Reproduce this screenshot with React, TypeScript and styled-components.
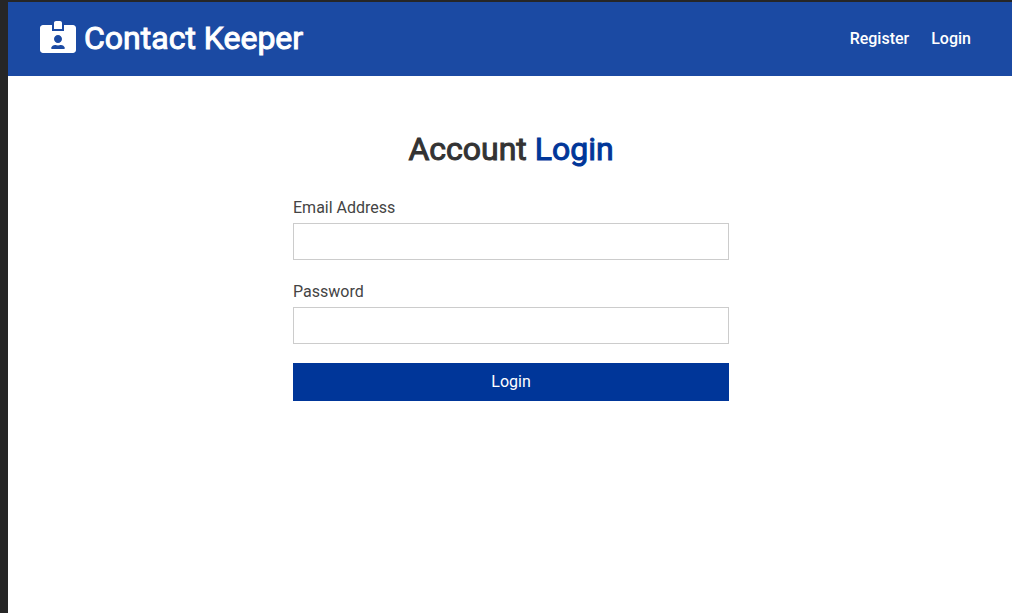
import React from "react";
import styled, { createGlobalStyle } from "styled-components";
import { FaIdCardAlt } from "react-icons/fa";

const GlobalStyle = createGlobalStyle`
  *, *::before, *::after { box-sizing: border-box; margin: 0; padding: 0; }
  body {
    font-family: Roboto, sans-serif;
    font-size: 16px;
    line-height: 26px;
    color: #333;
    background: #fff;
  }
`;

const Frame = styled.div`
  min-height: 100vh;
  border-top: 2px solid #262626;
  border-left: 8px solid #262626;
`;

const Navbar = styled.header`
  display: flex;
  align-items: center;
  justify-content: space-between;
  padding: 17px 32px 19px;
  background: #1b4aa3;
  color: #fff;
`;

const Brand = styled.h1`
  display: flex;
  align-items: center;
  gap: 8px;
  font-size: 32px;
  line-height: 38px;
  font-weight: 400;
  -webkit-text-stroke: 1px;
`;

const BrandIcon = styled(FaIdCardAlt)`
  width: 36px;
  height: 32px;
  margin-bottom: 2px;
  stroke-width: 0;
`;

const NavLinks = styled.nav`
  display: flex;
  gap: 4px;
`;

const NavLink = styled.a`
  padding: 2px 9px 0;
  color: #fff;
  font-weight: 500;
  text-decoration: none;
`;

const FormContainer = styled.main`
  width: 100%;
  max-width: 500px;
  margin: 32px auto;
  padding: 0 31px 0 33px;
`;

const Title = styled.h2`
  padding: 22px 0 27px;
  font-size: 32px;
  line-height: 38px;
  font-weight: 400;
  -webkit-text-stroke: 1px;
  text-align: center;
`;

const Accent = styled.span`
  color: #003699;
`;

const Field = styled.div`
  display: flex;
  flex-direction: column;
  margin-bottom: 19px;
`;

const Label = styled.label`
  margin-bottom: 2px;
  color: #444;
`;

const Input = styled.input`
  width: 100%;
  height: 37px;
  padding: 8px;
  border: 1px solid #ccc;
  font: inherit;
`;

const SubmitButton = styled.button`
  width: 100%;
  height: 38px;
  border: none;
  background: #003699;
  color: #fff;
  font: inherit;
  cursor: pointer;
`;

export default function App() {
  return (
    <>
      <GlobalStyle />
      <Frame>
        <Navbar>
          <Brand>
            <BrandIcon aria-hidden="true" />
            Contact Keeper
          </Brand>
          <NavLinks>
            <NavLink href="#register">Register</NavLink>
            <NavLink href="#login">Login</NavLink>
          </NavLinks>
        </Navbar>
        <FormContainer>
          <Title>
            Account <Accent>Login</Accent>
          </Title>
          <form onSubmit={(e) => e.preventDefault()}>
            <Field>
              <Label htmlFor="email">Email Address</Label>
              <Input id="email" type="email" name="email" />
            </Field>
            <Field>
              <Label htmlFor="password">Password</Label>
              <Input id="password" type="password" name="password" />
            </Field>
            <SubmitButton type="submit">Login</SubmitButton>
          </form>
        </FormContainer>
      </Frame>
    </>
  );
}
